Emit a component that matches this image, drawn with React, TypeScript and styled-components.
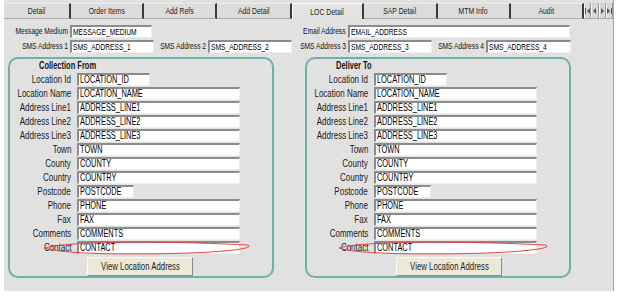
import styled, { createGlobalStyle } from "styled-components";

const GlobalStyle = createGlobalStyle`
  html, body {
    margin: 0;
    background: #fff;
  }
  body {
    font-family: "Liberation Sans", Arial, sans-serif;
    color: #141414;
  }
`;

// the screenshot is squashed sideways, so text is narrowed with scaleX
const Squeeze = styled.span<{ $scale?: number; $origin?: string }>`
  display: inline-block;
  flex: none;
  white-space: nowrap;
  transform: scaleX(${(p) => p.$scale ?? 0.75});
  transform-origin: ${(p) => p.$origin ?? "left"} center;
`;

const Page = styled.div`
  margin-left: 4px;
  width: 610px;
  height: 291px;
  box-sizing: border-box;
  background: #e1e1e1;
  border-right: 1px solid #a8a8a8;
  padding-top: 3px;
  overflow: hidden;
`;

const TabStrip = styled.div`
  display: flex;
  height: 16px;
`;

interface TabProps {
  $width: number;
  $active?: boolean;
}

const Tab = styled.div<TabProps>`
  width: ${(p) => p.$width}px;
  box-sizing: border-box;
  display: flex;
  align-items: center;
  justify-content: center;
  font-size: 9px;
  color: #1c1c1c;
  background: ${(p) => (p.$active ? "#e3e3e3" : "#dcdcdc")};
  border-top: 1px solid ${(p) => (p.$active ? "#fff" : "#ececec")};
  border-left: ${(p) => (p.$active ? "1px solid #fff" : "none")};
  border-right: 2px solid #3a3a3a;
  border-bottom: ${(p) => (p.$active ? "none" : "1px solid #a9a9a9")};
`;

const NavGroup = styled.div`
  flex: 1;
  display: flex;
  border-bottom: 1px solid #a9a9a9;
`;

const NavButton = styled.div`
  flex: 1;
  display: flex;
  align-items: center;
  justify-content: center;
  background: #d6d6d6;
  border-left: 1px solid #f4f4f4;
  border-right: 1px solid #9a9a9a;
`;

const TopForm = styled.div`
  display: grid;
  grid-template-columns: 66px 84px 54px 84px 56px 84px 54px 85px;
  grid-auto-rows: 14px;
  row-gap: 1px;
  padding-top: 5px;
  align-items: center;
`;

const TopLabel = styled.div<{ $col?: string }>`
  grid-column: ${(p) => p.$col || "auto"};
  display: flex;
  justify-content: flex-end;
  font-size: 9px;
  padding-right: 2px;
`;

interface FieldProps {
  $w?: number;
  $col?: string;
  $small?: boolean;
}

const Field = styled.div<FieldProps>`
  grid-column: ${(p) => p.$col || "auto"};
  box-sizing: border-box;
  height: 13px;
  width: ${(p) => (p.$w ? `${p.$w}px` : "100%")};
  background: #fff;
  border-top: 2px solid #8c8c8c;
  border-left: 2px solid #8c8c8c;
  border-right: 1px solid #efefef;
  border-bottom: 1px solid #efefef;
  font-size: ${(p) => (p.$small ? "9px" : "10px")};
  line-height: 10px;
  padding-left: 1px;
  white-space: nowrap;
  overflow: hidden;
  color: #000;
`;

const Select = styled(Field)`
  display: flex;
  justify-content: space-between;
  padding-right: 1px;
`;

const DropButton = styled.div`
  flex: none;
  width: 9px;
  height: 9px;
  background: #d4d0c8;
  border-top: 1px solid #fff;
  border-left: 1px solid #fff;
  border-right: 1px solid #555;
  border-bottom: 1px solid #555;
  box-sizing: border-box;
  display: flex;
  align-items: center;
  justify-content: center;
`;

const Panels = styled.div`
  display: flex;
  gap: 31px;
  padding: 4px 0 0 4px;
`;

const Panel = styled.div`
  width: 266px;
  height: 221px;
  box-sizing: border-box;
  border: 2px solid #6eaeab;
  border-radius: 10px;
`;

const PanelTitle = styled.div`
  height: 13px;
  line-height: 13px;
  margin-bottom: 1px;
  padding-left: 29px;
  font-size: 10px;
  font-weight: bold;
`;

const Row = styled.div`
  position: relative;
  display: grid;
  grid-template-columns: 61px auto;
  column-gap: 6px;
  height: 14px;
  align-items: start;
`;

const RowLabel = styled.div`
  display: flex;
  justify-content: flex-end;
  font-size: 10px;
  line-height: 13px;
  color: #1a1a1a;
`;

const ViewButton = styled.div<{ $offset: number }>`
  margin: 2px 0 0 ${(p) => p.$offset}px;
  width: 106px;
  height: 19px;
  box-sizing: border-box;
  display: flex;
  align-items: center;
  justify-content: center;
  background: #ece9d9;
  border: 1px solid;
  border-color: #fbfbf7 #8d8a80 #8d8a80 #fbfbf7;
  font-size: 10px;
  color: #222;
`;

const Scribble = styled.svg<{ $left: number; $width: number }>`
  position: absolute;
  left: ${(p) => p.$left}px;
  top: -1px;
  width: ${(p) => p.$width}px;
  height: 15px;
  pointer-events: none;
  overflow: visible;
`;

const tabs = [
  { label: "Detail", width: 67 },
  { label: "Order Items", width: 73 },
  { label: "Add Refs", width: 73 },
  { label: "Add Detail", width: 75 },
  { label: "LOC Detail", width: 72, active: true },
  { label: "SAP Detail", width: 74 },
  { label: "MTM Info", width: 73 },
  { label: "Audit", width: 73 },
];

const rows: { label: string; value: string; w: number }[] = [
  { label: "Location Id", value: "LOCATION_ID", w: 73 },
  { label: "Location Name", value: "LOCATION_NAME", w: 163 },
  { label: "Address Line1", value: "ADDRESS_LINE1", w: 163 },
  { label: "Address Line2", value: "ADDRESS_LINE2", w: 163 },
  { label: "Address Line3", value: "ADDRESS_LINE3", w: 163 },
  { label: "Town", value: "TOWN", w: 163 },
  { label: "County", value: "COUNTY", w: 163 },
  { label: "Country", value: "COUNTRY", w: 163 },
  { label: "Postcode", value: "POSTCODE", w: 57 },
  { label: "Phone", value: "PHONE", w: 163 },
  { label: "Fax", value: "FAX", w: 163 },
  { label: "Comments", value: "COMMENTS", w: 163 },
  { label: "Contact", value: "CONTACT", w: 163 },
];

const NavIcon = ({ dir, bar }: { dir: "l" | "r"; bar?: boolean }) => (
  <svg width="5" height="6" viewBox="0 0 5 6">
    {dir === "l" ? (
      <>
        {bar && <rect x="0" y="0" width="1" height="6" fill="#555" />}
        <path d={bar ? "M5 0 L2 3 L5 6 Z" : "M4 0 L1 3 L4 6 Z"} fill="#555" />
      </>
    ) : (
      <>
        <path d={bar ? "M0 0 L3 3 L0 6 Z" : "M1 0 L4 3 L1 6 Z"} fill="#555" />
        {bar && <rect x="4" y="0" width="1" height="6" fill="#555" />}
      </>
    )}
  </svg>
);

const AddressPanel = ({
  title,
  buttonOffset,
  markLeft,
  markWidth,
}: {
  title: string;
  buttonOffset: number;
  markLeft: number;
  markWidth: number;
}) => (
  <Panel>
    <PanelTitle>
      <Squeeze>{title}</Squeeze>
    </PanelTitle>
    {rows.map((r) => (
      <Row key={r.label}>
        <RowLabel>
          <Squeeze $scale={0.8} $origin="right">
            {r.label}
          </Squeeze>
        </RowLabel>
        <Field $w={r.w}>
          <Squeeze $scale={0.74}>{r.value}</Squeeze>
        </Field>
        {r.label === "Contact" && (
          <Scribble $left={markLeft} $width={markWidth} viewBox={`0 0 ${markWidth} 15`}>
            <path
              d={`M2 8 C 20 2, ${markWidth * 0.5} 0, ${markWidth - 6} 5 C ${markWidth + 2} 7, ${markWidth - 12} 11, ${markWidth * 0.7} 13 C ${markWidth * 0.4} 15, 18 14, 2 8 Z`}
              fill="none"
              stroke="#e04646"
              strokeWidth="1"
            />
          </Scribble>
        )}
      </Row>
    ))}
    <ViewButton $offset={buttonOffset}>
      <Squeeze $scale={0.78} $origin="center">
        View Location Address
      </Squeeze>
    </ViewButton>
  </Panel>
);

const TopText = ({ children }: { children: string }) => (
  <Squeeze $scale={0.74} $origin="right">
    {children}
  </Squeeze>
);

const TopValue = ({ children }: { children: string }) => <Squeeze $scale={0.74}>{children}</Squeeze>;

export default function App() {
  return (
    <>
      <GlobalStyle />
      <Page>
        <TabStrip>
          {tabs.map((t) => (
            <Tab key={t.label} $width={t.width} $active={t.active}>
              <Squeeze $scale={0.76} $origin="center">
                {t.label}
              </Squeeze>
            </Tab>
          ))}
          <NavGroup>
            <NavButton>
              <NavIcon dir="l" bar />
            </NavButton>
            <NavButton>
              <NavIcon dir="l" />
            </NavButton>
            <NavButton>
              <NavIcon dir="r" />
            </NavButton>
            <NavButton>
              <NavIcon dir="r" bar />
            </NavButton>
          </NavGroup>
        </TabStrip>

        <TopForm>
          <TopLabel>
            <TopText>Message Medium</TopText>
          </TopLabel>
          <Select $w={82} $small>
            <TopValue>MESSAGE_MEDIUM</TopValue>
            <DropButton>
              <svg width="5" height="3" viewBox="0 0 5 3">
                <path d="M0 0 L5 0 L2.5 3 Z" fill="#000" />
              </svg>
            </DropButton>
          </Select>
          <TopLabel $col="5">
            <TopText>Email Address</TopText>
          </TopLabel>
          <Field $col="6 / 9" $w={222} $small>
            <TopValue>EMAIL_ADDRESS</TopValue>
          </Field>

          <TopLabel>
            <TopText>SMS Address 1</TopText>
          </TopLabel>
          <Field $small>
            <TopValue>SMS_ADDRESS_1</TopValue>
          </Field>
          <TopLabel>
            <TopText>SMS Address 2</TopText>
          </TopLabel>
          <Field $small>
            <TopValue>SMS_ADDRESS_2</TopValue>
          </Field>
          <TopLabel>
            <TopText>SMS Address 3</TopText>
          </TopLabel>
          <Field $small>
            <TopValue>SMS_ADDRESS_3</TopValue>
          </Field>
          <TopLabel>
            <TopText>SMS Address 4</TopText>
          </TopLabel>
          <Field $small>
            <TopValue>SMS_ADDRESS_4</TopValue>
          </Field>
        </TopForm>

        <Panels>
          <AddressPanel title="Collection From" buttonOffset={77} markLeft={33} markWidth={210} />
          <AddressPanel title="Deliver To" buttonOffset={89} markLeft={30} markWidth={214} />
        </Panels>
      </Page>
    </>
  );
}
